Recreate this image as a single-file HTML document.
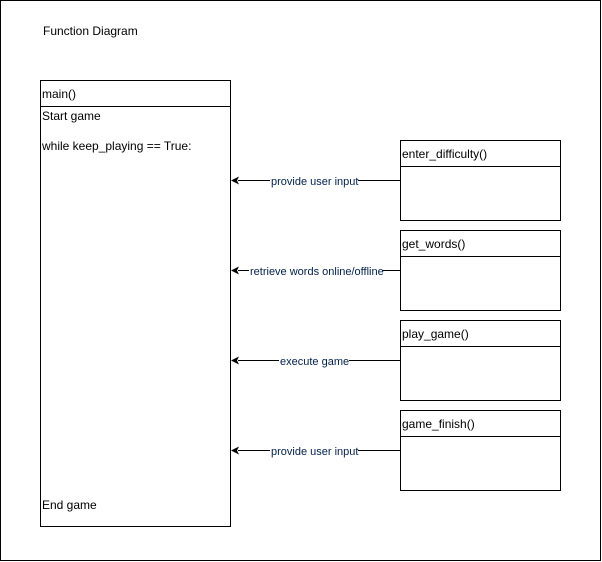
<!DOCTYPE html>
<html><head><style>body{margin:0;background:#fff}svg{display:block}text{font-family:"Liberation Sans",sans-serif;font-size:12px;fill:#000}.l{font-size:11px;fill:#001f4d}</style></head><body>
<svg width="602" height="562" xmlns="http://www.w3.org/2000/svg">
<rect x="0.5" y="0.5" width="600" height="560" fill="#fff" stroke="#000"/>
<text x="43" y="35">Function Diagram</text>
<rect x="40.5" y="80.5" width="190" height="446" fill="#fff" stroke="#000"/>
<line x1="40" y1="106.5" x2="231" y2="106.5" stroke="#000"/>
<text x="42" y="98">main()</text>
<text x="42" y="120">Start game</text>
<text x="42" y="150">while keep_playing == True:</text>
<text x="42" y="509">End game</text>
<g stroke="#000" fill="#fff">
<rect x="400.5" y="140.5" width="160" height="80"/><line x1="400" y1="166.5" x2="561" y2="166.5"/>
<rect x="400.5" y="230.5" width="160" height="80"/><line x1="400" y1="256.5" x2="561" y2="256.5"/>
<rect x="400.5" y="320.5" width="160" height="80"/><line x1="400" y1="346.5" x2="561" y2="346.5"/>
<rect x="400.5" y="410.5" width="160" height="80"/><line x1="400" y1="436.5" x2="561" y2="436.5"/>
<line x1="400" y1="180.5" x2="238" y2="180.5"/>
<line x1="400" y1="270.5" x2="238" y2="270.5"/>
<line x1="400" y1="360.5" x2="238" y2="360.5"/>
<line x1="400" y1="450.5" x2="238" y2="450.5"/>
</g>
<g fill="#000">
<path d="M231 180.5 L239 176.5 L237 180.5 L239 184.5Z"/>
<path d="M231 270.5 L239 266.5 L237 270.5 L239 274.5Z"/>
<path d="M231 360.5 L239 356.5 L237 360.5 L239 364.5Z"/>
<path d="M231 450.5 L239 446.5 L237 450.5 L239 454.5Z"/>
</g>
<text x="402" y="158">enter_difficulty()</text>
<text x="402" y="248">get_words()</text>
<text x="402" y="338">play_game()</text>
<text x="402" y="428">game_finish()</text>
<rect x="270" y="174" width="88" height="13" fill="#fff"/><text class="l" x="271" y="185">provide user input</text>
<rect x="249" y="264" width="133" height="13" fill="#fff"/><text class="l" x="250" y="275">retrieve words online/offline</text>
<rect x="279" y="354" width="70" height="13" fill="#fff"/><text class="l" x="280" y="365">execute game</text>
<rect x="270" y="444" width="88" height="13" fill="#fff"/><text class="l" x="271" y="455">provide user input</text>
</svg>
</body></html>
